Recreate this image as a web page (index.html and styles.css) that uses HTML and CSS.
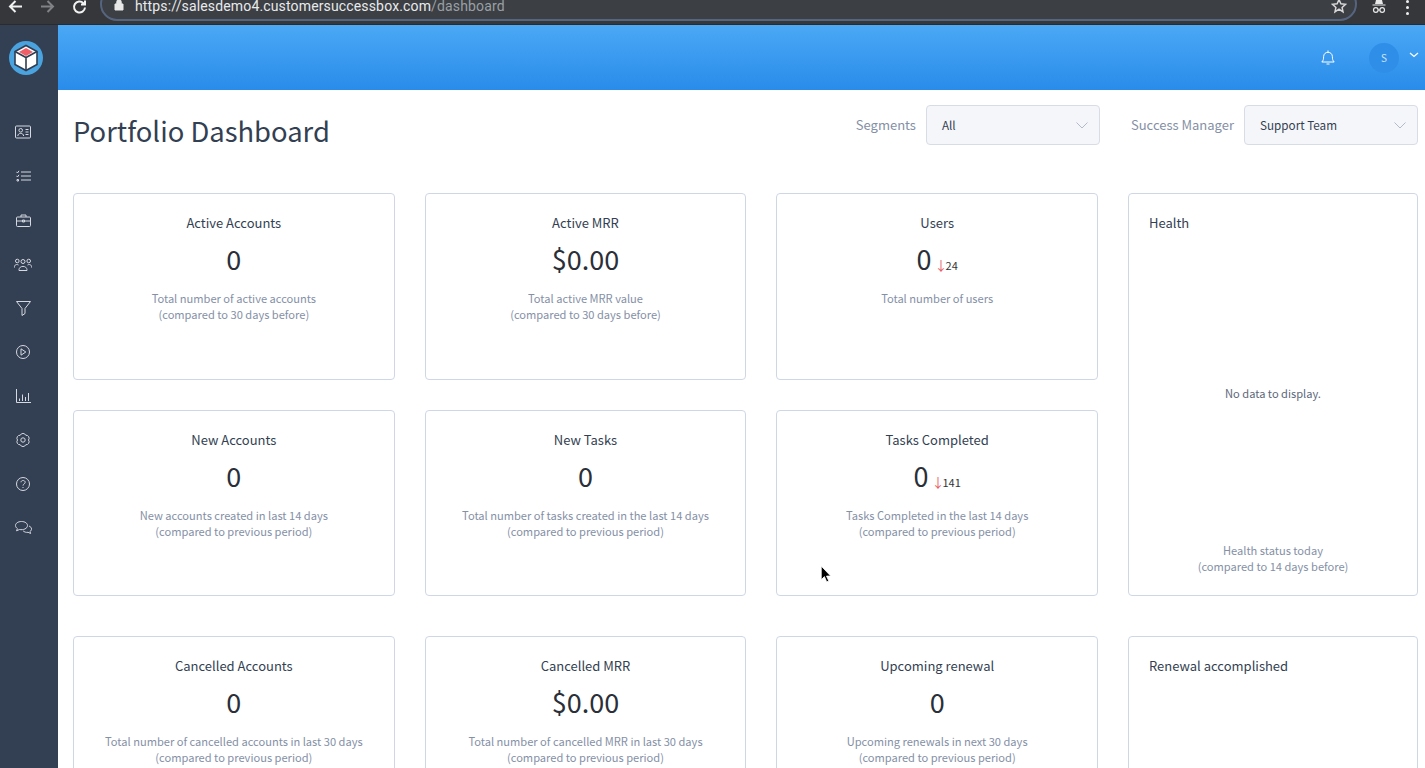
FILE: index.html
```html
<!doctype html>
<html lang="en">

<head>
  <meta charset="UTF-8" />
  <title>Portfolio Dashboard</title>
  <link rel="stylesheet" href="styles.css">
</head>

<body>
  <div class="browser-bar">
    <svg class="nav-icon" width="16" height="16" viewBox="0 0 16 16"><path d="M15 6.500H3M8.500 1 3 6.500 8.500 12" /></svg>
    <svg class="nav-icon dim" width="16" height="16" viewBox="0 0 16 16"><path d="M1 6.500h12M7.500 1 13 6.500 7.500 12" /></svg>
    <svg class="nav-icon reload" width="16" height="16" viewBox="0 0 16 16"><path d="M13 7.500a5.500 5.500 0 1 1-1.600-4.400L13 4.500M13 .5v4H9" /></svg>
    <div class="url-pill">
      <svg class="lock" width="10" height="12" viewBox="0 0 10 12"><path d="M1 5h8v6H1zM2.800 5V2.800a2.200 2.200 0 0 1 4.400 0V5" /></svg>
      <span class="url">https://salesdemo4.customersuccessbox.com<span class="url-path">/dashboard</span></span>
      <svg class="star" width="16" height="16" viewBox="0 0 16 16"><path d="m8 1.600 1.900 4.200 4.600.5-3.400 3.100.9 4.500L8 11.200l-4 2.700.9-4.500L1.500 6.300l4.600-.5z" /></svg>
    </div>
    <svg class="incognito" width="16" height="16" viewBox="0 0 16 16"><path class="fill" d="M5 0h6l1 4H4zM1.500 4.500h13v1h-13z" /><circle cx="4.800" cy="10" r="2.300" /><circle cx="11.200" cy="10" r="2.300" /><path d="M7 10h2" /></svg>
    <div class="kebab"><i></i><i></i><i></i></div>
  </div>

  <div class="app">
    <nav class="sidebar">
      <div class="logo">
        <svg width="34" height="34" viewBox="0 0 34 34">
          <circle cx="17" cy="17" r="17" fill="#4aa3df" />
          <path d="M17 4.500 28 10.500V23.500L17 29.500 6 23.500V10.500z" fill="#fff" stroke="#2f3d52" stroke-width="1.600" />
          <path d="M17 7 24 11 17 15 10 11z" fill="#ee5f68" />
          <path d="M6 10.500 17 16.500 28 10.500M17 16.500V29.500" fill="none" stroke="#2f3d52" stroke-width="1.600" />
        </svg>
      </div>
      <ul class="side-icons">
        <li><svg width="16" height="14" viewBox="0 0 16 14"><rect x=".5" y="1" width="15" height="12" rx="1" /><circle cx="5.700" cy="5.300" r="1.800" /><path d="M2.800 11c0-3.500 5.800-3.500 5.800 0M10.500 4.500h3M10.500 7h3M10.500 9.500h3" /></svg></li>
        <li><svg width="15" height="12" viewBox="0 0 15 12"><path d="M.5 1.800 1.500 3 3 .8M.5 5.800 1.500 7 3 4.800M5 2h10M5 6h10M5 10h10M1 9.500h1.500v1.500H1z" /></svg></li>
        <li><svg width="15" height="13" viewBox="0 0 15 13"><rect x=".5" y="3" width="14" height="9.500" rx="1" /><path d="M5 3V1h5v2M.5 7h14M6.500 6h2v2h-2z" /></svg></li>
        <li><svg width="18" height="13" viewBox="0 0 18 13"><circle cx="9" cy="3.500" r="2" /><circle cx="3.300" cy="3" r="1.800" /><circle cx="14.700" cy="3" r="1.800" /><path d="M5 12.500c-.5-5.500 8.500-5.500 8 0zM.5 9.500c-.5-3 2.500-3.500 4-2.500M17.500 9.500c.5-3-2.500-3.500-4-2.500" /></svg></li>
        <li><svg width="15" height="15" viewBox="0 0 15 15"><path d="M.5.500h14L9 7.500v5l-3 2v-7z" /></svg></li>
        <li><svg width="14" height="14" viewBox="0 0 14 14"><circle cx="7" cy="7" r="6.500" /><path d="m5 3.800 4.800 3.200L5 10.200z" /></svg></li>
        <li><svg width="15" height="14" viewBox="0 0 15 14"><path d="M.5 0v13.500H15M3.500 12V9.500M6.500 12V5.500M9.500 12V8M12.500 12V4" /></svg></li>
        <li><svg width="14" height="14" viewBox="0 0 14 14"><circle cx="7" cy="7" r="2.200" /><path d="M4.250 2.240A3 3 0 0 1 9.750 2.240 3 3 0 0 1 12.500 7 3 3 0 0 1 9.750 11.760 3 3 0 0 1 4.250 11.760 3 3 0 0 1 1.500 7 3 3 0 0 1 4.250 2.240z" /></svg></li>
        <li><svg width="14" height="14" viewBox="0 0 14 14"><circle cx="7" cy="7" r="6.500" /><path d="M5 5.300C5 2.800 9.200 3 9.200 5.300 9.200 7 7 6.800 7 8.600M7 10v1" /></svg></li>
        <li><svg width="17" height="14" viewBox="0 0 17 14"><path d="M6.500.5C3 .5.500 2.300.5 4.500c0 1.300.8 2.300 1.900 3.100L1.500 9.800 4.500 8.500c3.800.8 8-.9 8-4 0-2.200-2.500-4-6-4z" /><path d="M14 5c1.600.6 2.500 1.700 2.500 3 0 1-.6 1.900-1.500 2.500l.6 2-2.500-1.200c-2 .3-4-.3-5-1.500" /></svg></li>
      </ul>
    </nav>

    <div class="content">
      <header class="topbar">
        <svg class="bell" width="14" height="16" viewBox="0 0 14 16"><path d="M.8 12c1.600-1.400 1.800-3.200 1.800-5.300C2.600 4 4.500 2.300 7 2.300s4.400 1.700 4.400 4.400c0 2.100.2 3.900 1.800 5.300zM7 .5v1.800M5.500 14h3" /></svg>
        <div class="avatar">S</div>
        <svg class="user-caret" width="10" height="6" viewBox="0 0 10 6"><path d="m1 1 4 3.500L9 1" /></svg>
      </header>

      <main class="page">
        <div class="page-head">
          <h1>Portfolio Dashboard</h1>
          <div class="filters">
            <label class="filter-label">Segments</label>
            <div class="select select-first"><span>All</span><svg width="12" height="7" viewBox="0 0 12 7"><path d="m.5.500 5.500 5.500 5.500-5.500" /></svg></div>
            <label class="filter-label">Success Manager</label>
            <div class="select"><span>Support Team</span><svg width="12" height="7" viewBox="0 0 12 7"><path d="m.5.500 5.500 5.500 5.500-5.500" /></svg></div>
          </div>
        </div>

        <section class="cards">
          <div class="card">
            <h4>Active Accounts</h4>
            <div class="value">0</div>
            <p>Total number of active accounts<br>(compared to 30 days before)</p>
          </div>
          <div class="card">
            <h4>Active MRR</h4>
            <div class="value">$0.00</div>
            <p>Total active MRR value<br>(compared to 30 days before)</p>
          </div>
          <div class="card">
            <h4>Users</h4>
            <div class="value">0<span class="delta"><b>↓</b>24</span></div>
            <p>Total number of users</p>
          </div>
          <div class="card card-side">
            <h4>Health</h4>
            <div class="no-data">No data to display.</div>
            <p>Health status today<br>(compared to 14 days before)</p>
          </div>
          <div class="card">
            <h4>New Accounts</h4>
            <div class="value">0</div>
            <p>New accounts created in last 14 days<br>(compared to previous period)</p>
          </div>
          <div class="card">
            <h4>New Tasks</h4>
            <div class="value">0</div>
            <p>Total number of tasks created in the last 14 days<br>(compared to previous period)</p>
          </div>
          <div class="card">
            <h4>Tasks Completed</h4>
            <div class="value">0<span class="delta"><b>↓</b>141</span></div>
            <p>Tasks Completed in the last 14 days<br>(compared to previous period)</p>
          </div>
        </section>

        <section class="cards cards-next">
          <div class="card">
            <h4>Cancelled Accounts</h4>
            <div class="value">0</div>
            <p>Total number of cancelled accounts in last 30 days<br>(compared to previous period)</p>
          </div>
          <div class="card">
            <h4>Cancelled MRR</h4>
            <div class="value">$0.00</div>
            <p>Total number of cancelled MRR in last 30 days<br>(compared to previous period)</p>
          </div>
          <div class="card">
            <h4>Upcoming renewal</h4>
            <div class="value">0</div>
            <p>Upcoming renewals in next 30 days<br>(compared to previous period)</p>
          </div>
          <div class="card card-side">
            <h4>Renewal accomplished</h4>
          </div>
        </section>
      </main>
    </div>
  </div>

  <svg class="mouse" width="13" height="19" viewBox="0 0 12 18"><path d="M1 1v13l3-3 2.200 5 2-.9L6 10.500h4z" /></svg>
</body>

</html>
```

FILE: styles.css
```css
* {
  margin: 0;
  padding: 0;
  box-sizing: border-box;
}

html,
body {
  height: 768px;
  overflow: hidden;
}

body {
  font-family: "Noto Sans CJK SC", "Noto Sans", sans-serif;
  color: #333f52;
  background: #fff;
}

.browser-bar {
  height: 25px;
  display: flex;
  align-items: flex-start;
  background: #35373a;
  border-bottom: 1px solid #2a2b2d;
  overflow: hidden;
}

.nav-icon {
  fill: none;
  stroke: #f2f2f2;
  stroke-width: 2;
  margin: 0 17px 0 7px;
  flex: none;
}

.nav-icon.dim {
  stroke: #808285;
  margin: 0 16px 0 0;
}

.nav-icon.reload {
  margin: 0 12px 0 0;
}

.url-pill {
  width: 1257px;
  height: 34px;
  margin-top: -13px;
  padding: 0 8px 0 12px;
  display: flex;
  align-items: flex-end;
  flex: none;
  background: #3c3f43;
  border: 2px solid #55657f;
  border-radius: 17px;
}

.lock {
  fill: #e8e8e8;
  stroke: #e8e8e8;
  margin: 0 11px 8px 0;
}

.url {
  font: 14px/18px Roboto, sans-serif;
  letter-spacing: 0.15px;
  color: #e8eaed;
  margin-bottom: 4px;
}

.url-path {
  color: #9aa0a6;
}

.star {
  fill: none;
  stroke: #d8d8d8;
  stroke-width: 1.500;
  margin: 0 0 5px auto;
}

.incognito {
  fill: none;
  stroke: #e8e8e8;
  stroke-width: 1.200;
  margin: 0 0 0 14px;
  flex: none;
}

.incognito .fill {
  fill: #e8e8e8;
  stroke: none;
}

.kebab {
  display: flex;
  flex-direction: column;
  gap: 3px;
  margin: 0 0 0 19px;
}

.kebab i {
  width: 3px;
  height: 3px;
  border-radius: 50%;
  background: #f0f0f0;
}

.app {
  display: flex;
  height: 743px;
}

.sidebar {
  width: 58px;
  flex: none;
  background: #333f52;
}

.logo {
  padding: 16px 0 0 9px;
  height: 66px;
}

.logo svg {
  display: block;
}

.side-icons {
  list-style: none;
  margin-top: 19px;
}

.side-icons li {
  height: 44px;
  width: 46px;
  display: flex;
  align-items: center;
  justify-content: center;
}

.side-icons svg {
  fill: none;
  stroke: #d5d9e0;
  stroke-width: 1;
}

.content {
  flex: 1;
  min-width: 0;
}

.topbar {
  height: 65px;
  display: flex;
  align-items: center;
  padding-right: 6px;
  background: linear-gradient(180deg, #4aa8f5, #2a8cea);
}

.bell {
  fill: none;
  stroke: #fff;
  stroke-width: 1;
  margin-left: auto;
}

.avatar {
  width: 30px;
  height: 30px;
  margin: 0 10px 0 34px;
  border-radius: 50%;
  background: #2f8ee8;
  color: #cfe4fa;
  font-size: 10px;
  line-height: 30px;
  text-align: center;
}

.user-caret {
  fill: none;
  stroke: #fff;
  stroke-width: 1.200;
  margin-bottom: 6px;
}

.page {
  padding: 0 7px 0 15px;
}

.page-head {
  height: 103px;
  display: flex;
  justify-content: space-between;
  align-items: flex-start;
}

h1 {
  font-size: 27.400px;
  font-weight: 400;
  line-height: 40px;
  margin-top: 20px;
  color: #333f52;
}

.filters {
  display: flex;
  align-items: center;
  margin-top: 15px;
}

.filter-label {
  font-size: 13px;
  color: #8490a6;
  margin-right: 10px;
  padding-bottom: 1px;
}

.select {
  width: 174px;
  height: 40px;
  padding: 0 11px 0 15px;
  display: flex;
  align-items: center;
  justify-content: space-between;
  font-size: 11.700px;
  color: #333f52;
  background: #f5f6f9;
  border: 1px solid #d8dce6;
  border-radius: 4px;
}

.select span {
  padding-bottom: 2px;
}

.select-first {
  margin-right: 31px;
}

.select svg {
  fill: none;
  stroke: #b4bac6;
}

.cards {
  display: grid;
  grid-template-columns: 1fr 1fr 1fr 290px;
  grid-auto-rows: 186.500px;
  gap: 30px;
}

.cards-next {
  margin-top: 40px;
}

.card {
  padding: 19px 20px 20px;
  text-align: center;
  border: 1px solid #cfd7e6;
  border-radius: 4px;
  background: #fff;
}

.card h4 {
  font-size: 13px;
  font-weight: 400;
  line-height: 20px;
  color: #333f52;
}

.value {
  font-size: 27px;
  line-height: 38px;
  margin-top: 7px;
  color: #2a2f38;
}

.delta {
  font-size: 11px;
  line-height: 14px;
  margin-left: 3px;
  color: #333;
}

.delta b {
  font-weight: 400;
  font-size: 13px;
  margin-right: -2px;
  color: #e8606a;
}

.card p {
  font-size: 11.100px;
  line-height: 16px;
  margin-top: 12px;
  color: #8490a6;
}

.card-side {
  grid-column: 4;
  grid-row: span 2;
  display: flex;
  flex-direction: column;
  text-align: left;
  padding-bottom: 21px;
}

.card-side p {
  margin-top: 0;
  text-align: center;
}

.no-data {
  flex: 1;
  display: flex;
  align-items: center;
  justify-content: center;
  padding-top: 10px;
  font-size: 11.100px;
  color: #5c677a;
}

.mouse {
  position: absolute;
  left: 820px;
  top: 565px;
  fill: #000;
  stroke: #fff;
  stroke-width: 0.800;
}
```
